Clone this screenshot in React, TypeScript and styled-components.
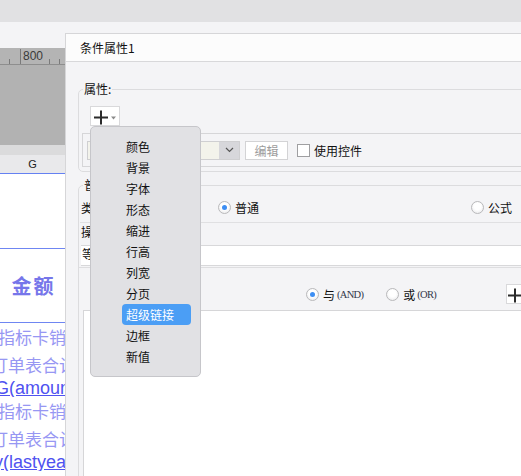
import React from 'react'
import styled, { createGlobalStyle } from 'styled-components'

const GlobalStyle = createGlobalStyle`
  html, body {
    margin: 0;
    padding: 0;
  }
  body {
    font-family: "Noto Sans CJK SC", "Noto Sans", sans-serif;
    font-size: 12px;
    color: #111;
    background: #f4f4f6;
  }
  * {
    box-sizing: border-box;
  }
`

const Screen = styled.div`
  position: relative;
  width: 521px;
  height: 476px;
  overflow: hidden;
  display: flex;
  flex-direction: column;
  background: #f4f4f6;
`

const TopBand = styled.div`
  flex: none;
  height: 22px;
  background: #e1e1e3;
`

const Workspace = styled.div`
  flex: 1;
  min-height: 0;
  display: flex;
`

/* ---- spreadsheet behind the dialog ---- */

const Sheet = styled.div`
  flex: none;
  width: 65px;
  display: flex;
  flex-direction: column;
  padding-top: 26px;
  overflow: hidden;
`

const Ruler = styled.div`
  position: relative;
  flex: none;
  height: 17px;
  background: #b4b4b4;
  border-bottom: 1px solid #8e8e8e;
  padding-left: 23px;
  font-family: "Liberation Sans", Arial, sans-serif;
  font-size: 12px;
  line-height: 17px;
  color: #3a3a3a;

  svg {
    position: absolute;
    left: 0;
    top: 0;
  }
`

const RulerLabel = styled.span`
  position: relative;
`

const GrayPane = styled.div`
  flex: none;
  height: 80px;
  background: #b2b2b2;
`

const Strip = styled.div`
  flex: none;
  height: 10px;
  background: #dbdbdc;
`

const ColHeader = styled.div`
  flex: none;
  height: 19px;
  background: #e9e9eb;
  border-bottom: 1px solid #6581f2;
  font-family: "Liberation Sans", Arial, sans-serif;
  font-size: 11px;
  line-height: 18px;
  text-align: center;
  color: #222;
`

const Cells = styled.div`
  flex: 1;
  background: #fff;
  display: flex;
  flex-direction: column;
`

const CellRow = styled.div<{ $h: number }>`
  flex: none;
  height: ${p => p.$h}px;
  border-bottom: 1px solid #6f86f2;
  display: flex;
  align-items: center;
  justify-content: center;
`

const HeadingText = styled.span`
  font-size: 20px;
  font-weight: 700;
  color: #7676ea;
  letter-spacing: 2px;
  margin-left: 2px;
`

const CellLine = styled.div<{ $h: number; $indent: number; $link?: boolean }>`
  flex: none;
  height: ${p => p.$h}px;
  line-height: ${p => p.$h}px;
  white-space: nowrap;
  overflow: hidden;
  text-indent: ${p => p.$indent}px;
  font-family: ${p =>
    p.$link ? '"Liberation Sans", Arial, sans-serif' : '"Noto Sans CJK SC", sans-serif'};
  font-size: ${p => (p.$link ? 18 : 17)}px;
  color: ${p => (p.$link ? '#4f52f0' : '#9797f3')};
  text-decoration: ${p => (p.$link ? 'underline' : 'none')};
`

/* ---- dialog ---- */

const Dialog = styled.div`
  flex: none;
  width: 480px;
  margin-top: 11px;
  display: flex;
  flex-direction: column;
  border-top: 1px solid #d6d6d8;
  border-left: 1px solid #d6d6d8;
`

const TitleBar = styled.div`
  flex: none;
  height: 28px;
  padding-left: 14px;
  display: flex;
  align-items: center;
  background: #fcfcfc;
  border-bottom: 1px solid #d8d8da;
  font-size: 12px;
`

const Body = styled.div`
  flex: 1;
  min-height: 0;
  display: flex;
  flex-direction: column;
  padding-left: 12px;
`

const Group = styled.fieldset<{ $gap: number; $grow?: boolean }>`
  margin: ${p => p.$gap}px 0 ${p => (p.$grow ? -20 : 0)}px 0;
  padding: 0 0 ${p => (p.$grow ? 0 : 4)}px 0;
  min-width: 0;
  border: 1px solid #dcdcde;
  border-radius: 5px;
  display: flex;
  flex-direction: column;
  flex: ${p => (p.$grow ? 1 : 'none')};
`

const Legend = styled.legend`
  margin-left: 4px;
  padding: 0 1px;
  line-height: 16px;
  font-size: 12px;
`

const IconButton = styled.button<{ $w: number }>`
  flex: none;
  width: ${p => p.$w}px;
  height: 20px;
  padding: 0;
  border: 1px solid #d9d9db;
  background: #fff;
  display: flex;
  align-items: center;
  justify-content: flex-start;
`

const AddButtonSlot = styled.div`
  margin: 9px 0 0 11px;
`

const ControlRow = styled.div`
  height: 34px;
  margin: 7px 0 0 3px;
  padding-left: 4px;
  display: flex;
  align-items: center;
  border-top: 1px solid #d6d6d8;
  border-bottom: 1px solid #d6d6d8;
  border-left: 1px solid #d6d6d8;
`

const Combo = styled.div`
  width: 153px;
  height: 19px;
  display: flex;
  border: 1px solid #cfcfd1;
  background: #f3f3eb;
`

const ComboField = styled.div`
  flex: 1;
`

const ComboArrow = styled.div`
  width: 20px;
  background: #d7d7db;
  display: flex;
  align-items: center;
  justify-content: center;
`

const TextButton = styled.div`
  width: 43px;
  height: 19px;
  margin-left: 5px;
  border: 1px solid #d3d3d5;
  background: #fff;
  color: #9c9c9c;
  line-height: 17px;
  text-align: center;
`

const Checkbox = styled.span`
  width: 13px;
  height: 13px;
  margin-left: 9px;
  border: 1px solid #9f9fa1;
  background: #fff;
`

const CheckLabel = styled.span`
  margin-left: 4px;
`

const TypeRow = styled.div`
  height: 30px;
  margin-left: 1px;
  padding-left: 1px;
  display: grid;
  grid-template-columns: 137px 253px auto;
  align-items: center;
  border-bottom: 1px solid #e0e0e2;
`

const LabelRow = styled.div`
  height: 22px;
  margin-left: 1px;
  padding: 0 0 6px 1px;
  display: flex;
  align-items: center;
`

const InputField = styled.div`
  height: 21px;
  margin-left: 2px;
  padding-left: 1px;
  background: #fff;
  border-top: 1px solid #d8d8da;
  border-bottom: 1px solid #d8d8da;
  line-height: 15px;
`

const LogicRow = styled.div`
  height: 43px;
  margin-top: 1px;
  padding: 10px 0 0 227px;
  display: flex;
  align-items: center;
  border-top: 1px solid #dedee0;
`

const Option = styled.label<{ $offset?: number }>`
  display: flex;
  align-items: center;
  margin-left: ${p => p.$offset ?? 0}px;
`

const Radio = styled.span<{ $on?: boolean }>`
  position: relative;
  flex: none;
  width: 13px;
  height: 13px;
  margin-right: 4px;
  border-radius: 50%;
  border: 1px solid #b9b9bb;
  background: radial-gradient(circle at 50% 40%, #ffffff 40%, #e4e4e6 100%);

  &::after {
    content: '';
    display: ${p => (p.$on ? 'block' : 'none')};
    position: absolute;
    left: 3px;
    top: 3px;
    width: 5px;
    height: 5px;
    border-radius: 50%;
    background: #3d8ef3;
  }
`

const Small = styled.span`
  margin-left: 2px;
  font-family: "Liberation Serif", "Times New Roman", serif;
  font-size: 10.5px;
  letter-spacing: -0.7px;
  color: #33384a;
`

const AddRight = styled.div`
  margin-left: 70px;
`

const WhitePanel = styled.div`
  flex: 1;
  margin-left: 4px;
  background: #fff;
  border-top: 1px solid #d6d6d8;
  border-left: 1px solid #d6d6d8;
`

/* ---- popup menu ---- */

const Menu = styled.ul`
  position: absolute;
  left: 90px;
  top: 126px;
  width: 111px;
  height: 251px;
  margin: 0;
  padding: 9px 0;
  list-style: none;
  background: #e1e1e4;
  border: 1px solid #c6c6ca;
  border-radius: 5px;
`

const MenuItem = styled.li<{ $active?: boolean }>`
  width: 69px;
  height: 21px;
  margin-left: 31px;
  padding-left: 4px;
  line-height: 21px;
  border-radius: 4px;
  background: ${p => (p.$active ? '#4b9ef5' : 'transparent')};
  color: ${p => (p.$active ? '#fff' : '#111')};
`

const PlusIcon: React.FC<{ caret?: boolean }> = ({ caret }) => (
  <svg width={caret ? 28 : 16} height="18" viewBox={caret ? '0 0 28 18' : '0 0 16 18'}>
    <path
      d="M3 10.5H17M10 3.5V17.5"
      stroke="#2b2b2b"
      strokeWidth="2"
      fill="none"
      transform={caret ? '' : 'translate(-2 0)'}
    />
    {caret && <path d="M20 9.5h5l-2.5 3z" fill="#8a8a8a" />}
  </svg>
)

const menuItems = ['颜色', '背景', '字体', '形态', '缩进', '行高', '列宽', '分页', '超级链接', '边框', '新值']

const sheetLines: { text: string; h: number; indent: number; link?: boolean }[] = [
  { text: '指标卡销售额', h: 28, indent: -2 },
  { text: '订单表合计', h: 28, indent: -9 },
  { text: 'G(amount)', h: 18, indent: -5, link: true },
  { text: '指标卡销售额', h: 28, indent: -2 },
  { text: '订单表合计', h: 28, indent: -9 },
  { text: 'y(lastyear)', h: 18, indent: -6, link: true },
]

export default function App() {
  return (
    <>
      <GlobalStyle />
      <Screen>
        <TopBand />
        <Workspace>
          <Sheet>
            <Ruler>
              <svg width="65" height="16">
                <path d="M9.5 11V16M20.5 1V16M49.5 11V16M59.5 11V16" stroke="#7a7a7a" strokeWidth="1" />
              </svg>
              <RulerLabel>800</RulerLabel>
            </Ruler>
            <GrayPane />
            <Strip />
            <ColHeader>G</ColHeader>
            <Cells>
              <CellRow $h={75} />
              <CellRow $h={74}>
                <HeadingText>金额</HeadingText>
              </CellRow>
              {sheetLines.map((l, i) => (
                <CellLine key={i} $h={l.h} $indent={l.indent} $link={l.link}>
                  {l.text}
                </CellLine>
              ))}
            </Cells>
          </Sheet>

          <Dialog>
            <TitleBar>条件属性1</TitleBar>
            <Body>
              <Group $gap={19}>
                <Legend>属性:</Legend>
                <AddButtonSlot>
                  <IconButton $w={30}>
                    <PlusIcon caret />
                  </IconButton>
                </AddButtonSlot>
                <ControlRow>
                  <Combo>
                    <ComboField />
                    <ComboArrow>
                      <svg width="9" height="6" viewBox="0 0 9 6">
                        <path d="M1 1l3.5 3.5L8 1" stroke="#555" strokeWidth="1.2" fill="none" />
                      </svg>
                    </ComboArrow>
                  </Combo>
                  <TextButton>编辑</TextButton>
                  <Checkbox />
                  <CheckLabel>使用控件</CheckLabel>
                </ControlRow>
              </Group>

              <Group $gap={5} $grow>
                <Legend>普通属性</Legend>
                <TypeRow>
                  <span>类型</span>
                  <Option>
                    <Radio $on />
                    普通
                  </Option>
                  <Option>
                    <Radio />
                    公式
                  </Option>
                </TypeRow>
                <LabelRow>操作</LabelRow>
                <InputField>等于</InputField>
                <LogicRow>
                  <Option>
                    <Radio $on />
                    与<Small>(AND)</Small>
                  </Option>
                  <Option $offset={23}>
                    <Radio />
                    或<Small>(OR)</Small>
                  </Option>
                  <AddRight>
                    <IconButton $w={24}>
                      <PlusIcon />
                    </IconButton>
                  </AddRight>
                </LogicRow>
                <WhitePanel />
              </Group>
            </Body>
          </Dialog>
        </Workspace>

        <Menu>
          {menuItems.map(m => (
            <MenuItem key={m} $active={m === '超级链接'}>
              {m}
            </MenuItem>
          ))}
        </Menu>
      </Screen>
    </>
  )
}
